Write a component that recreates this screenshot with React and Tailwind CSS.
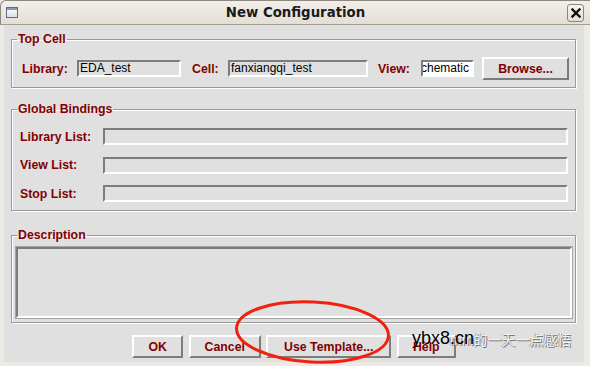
import React from "react";

const label = "font-['Liberation_Sans',Arial,sans-serif] font-bold text-[12.3px] text-[#800000] leading-[14px]";
const field =
  "h-[17px] border-2 border-t-[#7c7c7c] border-l-[#7c7c7c] border-b-white border-r-white bg-[#e0e0e0] font-['Liberation_Sans',Arial,sans-serif] text-[12px] leading-[13px] text-black pl-[1px] overflow-hidden whitespace-nowrap";
const button =
  "h-[23px] border-2 border-t-white border-l-white border-b-[#7c7c7c] border-r-[#7c7c7c] bg-[#e0e0e0] flex items-center justify-center";

function Group({ title, className, children }) {
  return (
    <fieldset
      className={`ml-[7px] w-[565px] border border-[#9a9a9a] shadow-[inset_1px_1px_0_#ffffff,1px_1px_0_#ffffff] ${className}`}
    >
      <legend className={`${label} ml-[5px] px-[1px]`}>{title}</legend>
      {children}
    </fieldset>
  );
}

export default function App() {
  return (
    <div className="relative w-[590px] h-[366px] overflow-hidden bg-[#edeae5] flex flex-col">
      {/* title bar */}
      <div className="h-[25px] shrink-0 relative flex items-center justify-center rounded-tl-[6px] border-t border-l border-[#8e887e] border-b border-b-[#a29c91] bg-gradient-to-b from-[#f2efeb] to-[#e3ded6]">
        <div className="absolute left-[5px] top-[6px] w-[12px] h-[11px] border border-[#5f6e88] bg-gradient-to-b from-[#ffffff] to-[#dcdfe6]">
          <div className="h-[2px] bg-[#8a98b3]" />
        </div>
        <span className="font-['DejaVu_Sans',sans-serif] font-bold text-[13.3px] text-[#1a1a1a]">
          New Configuration
        </span>
        <div className="absolute right-[6px] top-[3px] w-[17px] h-[18px] rounded-[3px] border border-[#8d867b] bg-gradient-to-b from-[#f6f4f1] to-[#e2ddd5] flex items-center justify-center">
          <svg width="10" height="10" viewBox="0 0 10 10">
            <path d="M1.5 1.5 L8.5 8.5 M8.5 1.5 L1.5 8.5" stroke="#111" strokeWidth="2.4" strokeLinecap="square" />
          </svg>
        </div>
      </div>

      {/* dialog body */}
      <div className="ml-[4px] w-[580px] h-[337px] bg-[#e0e0e0] flex flex-col">
        <Group title="Top Cell" className="mt-[7px]">
          <div className="pt-[11px] pb-[7px] pl-[10px] flex items-center">
            <span className={`${label} w-[55px]`}>Library:</span>
            <div className={`${field} w-[104px]`}>EDA_test</div>
            <span className={`${label} ml-[11px] w-[36px]`}>Cell:</span>
            <div className={`${field} w-[140px]`}>fanxiangqi_test</div>
            <span className={`${label} ml-[10px] w-[43px]`}>View:</span>
            <div className={`${field} w-[53px] !bg-white`}>
              <span className="block -ml-[9px]">schematic</span>
            </div>
            <button className={`${button} ml-[8px] w-[87px]`}>
              <span className={label}>Browse...</span>
            </button>
          </div>
        </Group>

        <Group title="Global Bindings" className="mt-[14px]">
          <div className="pt-[12px] pb-[8px] pl-[8px] flex flex-col gap-[11.5px]">
            {["Library List:", "View List:", "Stop List:"].map((t) => (
              <div key={t} className="flex items-center">
                <span className={`${label} w-[83px]`}>{t}</span>
                <div className={`${field} w-[465px]`} />
              </div>
            ))}
          </div>
        </Group>

        <Group title="Description" className="mt-[17px]">
          <div className="pt-[4px] pb-[3px] pl-[3px]">
            <div className="w-[558px] h-[73px] border border-[#a3a3a3] flex">
              <div className="flex-1 border-2 border-t-[#7c7c7c] border-l-[#7c7c7c] border-b-white border-r-white bg-[#e0e0e0]" />
            </div>
          </div>
        </Group>

        <div className="mt-[12px] flex justify-center gap-[5.5px]">
          <button className={`${button} w-[51px]`}>
            <span className={label}>OK</span>
          </button>
          <button className={`${button} w-[72px]`}>
            <span className={label}>Cancel</span>
          </button>
          <button className={`${button} w-[125px]`}>
            <span className={label}>Use Template...</span>
          </button>
          <button className={`${button} w-[59px]`}>
            <span className={label}>Help</span>
          </button>
        </div>
      </div>

      {/* red annotation ellipse */}
      <svg className="absolute left-0 top-0 pointer-events-none" width="590" height="366">
        <ellipse cx="312.5" cy="332" rx="76" ry="30" transform="rotate(3 312.5 332)" fill="none" stroke="#f2200f" strokeWidth="3" />
      </svg>

      {/* watermark */}
      <span className="absolute left-[450px] top-[332px] font-['Liberation_Sans','Noto_Sans_CJK_SC',sans-serif] text-[14px] leading-[16px] text-[#f2f2f2] [text-shadow:1px_1px_0_#7a7a7a,-1px_0_0_#9a9a9a] whitespace-nowrap">
        mm的一天一点感悟
      </span>
      <span className="absolute left-[412px] top-[328px] font-['Liberation_Sans',Arial,sans-serif] text-[18px] leading-[20px] text-black whitespace-nowrap">
        ybx8.cn
      </span>
    </div>
  );
}
